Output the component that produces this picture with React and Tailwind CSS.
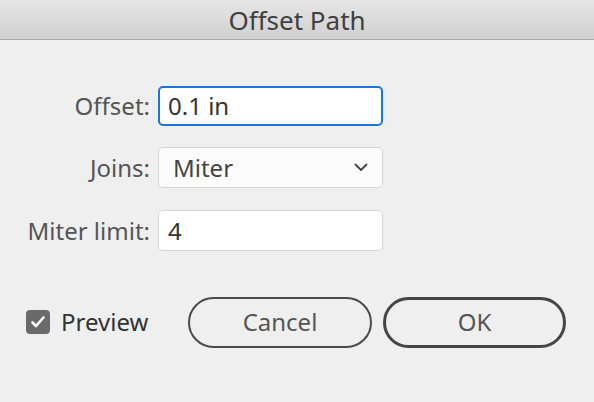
import React from "react";

export default function App() {
  const font = { fontFamily: '"Noto Sans", "Open Sans", sans-serif' };
  return (
    <div className="w-[594px] h-[402px] bg-[#efefef] overflow-hidden flex flex-col" style={font}>
      <div className="h-[40px] shrink-0 flex items-center justify-center bg-gradient-to-b from-[#e6e6e6] to-[#d0d0d0] border-b border-[#a9a9a9] text-[26px] leading-none text-[#404040]">
        Offset Path
      </div>
      <div className="flex flex-col pt-[46px]">
        <div className="flex items-center h-[40px]">
          <div className="w-[150px] text-right text-[24px] leading-none text-[#555]">Offset:</div>
          <div className="ml-[8px] w-[225px] h-[40px] rounded-[5px] border-2 border-[#1a73e3] bg-white flex items-center px-[8px] text-[24px] leading-none text-[#333]">
            0.1 in
          </div>
        </div>
        <div className="flex items-center h-[41px] mt-[21px]">
          <div className="w-[150px] text-right text-[24px] leading-none text-[#555]">Joins:</div>
          <div className="ml-[8px] w-[225px] h-[41px] rounded-[5px] border border-[#d6d6d6] bg-[#fcfcfc] flex items-center justify-between pl-[14px] pr-[14px] text-[24px] leading-none text-[#444]">
            <span>Miter</span>
            <svg width="14" height="9" viewBox="0 0 14 9" fill="none">
              <path d="M1.5 1.5 L7 7 L12.5 1.5" stroke="#444" strokeWidth="1.8" strokeLinecap="round" strokeLinejoin="round" />
            </svg>
          </div>
        </div>
        <div className="flex items-center h-[41px] mt-[22px]">
          <div className="w-[150px] text-right text-[24px] leading-none text-[#555]">Miter limit:</div>
          <div className="ml-[8px] w-[225px] h-[41px] rounded-[5px] border border-[#d6d6d6] bg-white flex items-center px-[9px] text-[24px] leading-none text-[#333]">
            4
          </div>
        </div>
        <div className="flex items-center mt-[45px] h-[52px]">
          <div className="ml-[26px] w-[24px] h-[24px] rounded-[4px] bg-[#6a6a6a] flex items-center justify-center">
            <svg width="16" height="14" viewBox="0 0 16 14" fill="none">
              <path d="M2.5 7.5 L6 11 L13.5 2.5" stroke="white" strokeWidth="2.6" strokeLinecap="round" strokeLinejoin="round" />
            </svg>
          </div>
          <span className="ml-[11px] text-[24px] leading-none text-[#333]">Preview</span>
          <div className="ml-auto flex gap-[11px] mr-[28px]">
            <div className="w-[184px] h-[51px] rounded-full border-2 border-[#4a4a4a] flex items-center justify-center text-[24px] leading-none text-[#555]">
              Cancel
            </div>
            <div className="w-[183px] h-[51px] rounded-full border-[3px] border-[#454545] flex items-center justify-center text-[24px] leading-none text-[#555]">
              OK
            </div>
          </div>
        </div>
      </div>
    </div>
  );
}
